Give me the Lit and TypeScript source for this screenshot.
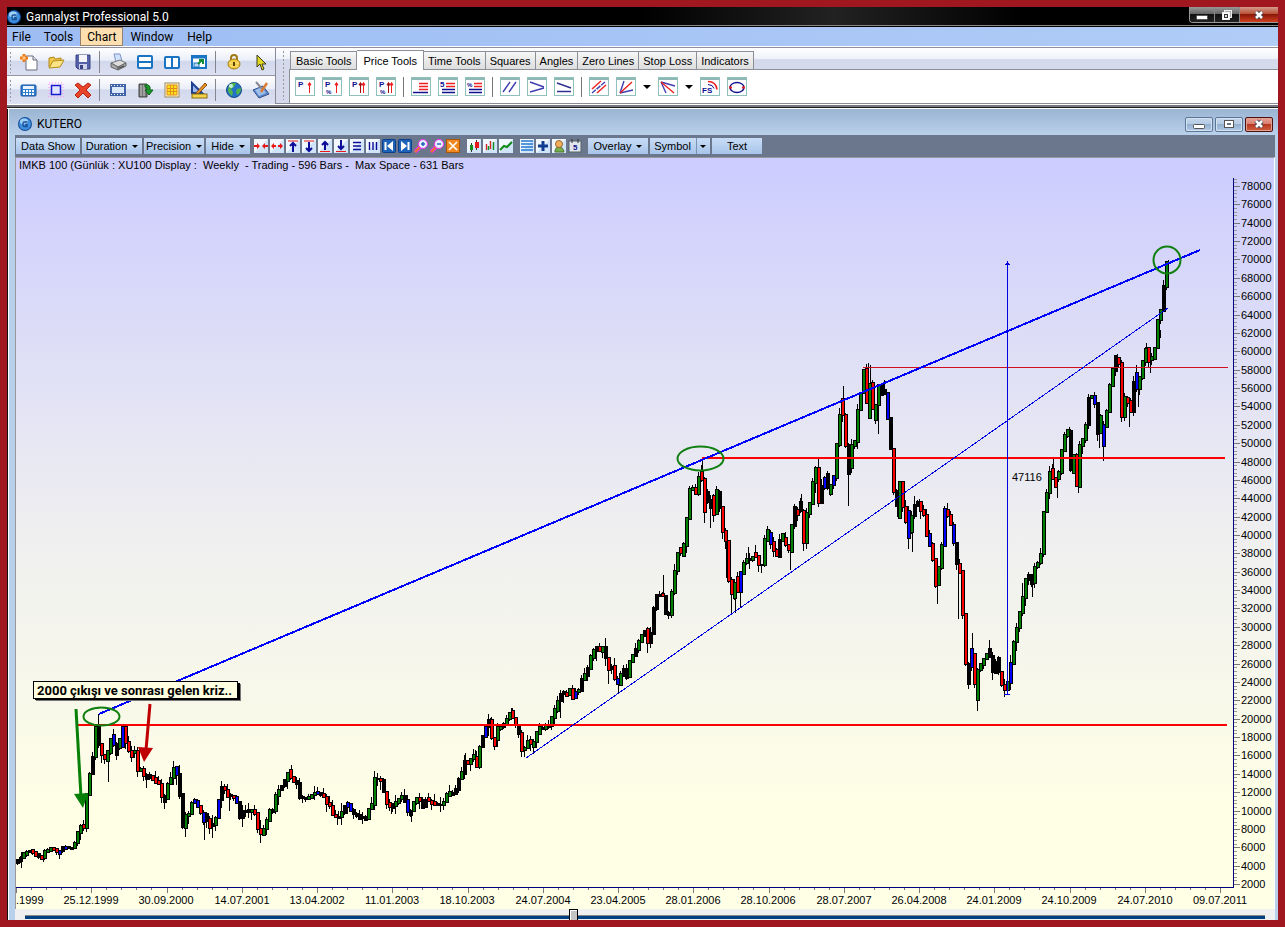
import { LitElement, html, svg, css } from "lit";
import { customElement } from "lit/decorators.js";

const icon = (body: unknown, w = 18, h = 18) =>
  html`<svg class="ico" width=${w} height=${h} viewBox="0 0 ${w} ${h}" aria-hidden="true">${body}</svg>`;

const orb = svg`<circle cx="7" cy="7" r="7" fill="#124a9c"/><circle cx="7" cy="7" r="6" fill="#3f8fdc"/><ellipse cx="6" cy="4.500" rx="4" ry="3" fill="#9fd0f6"/><path d="M9.500 5H6.500Q5 5 5 6.500V8.500Q5 9.500 6.500 9.500H9V7.500H7" fill="none" stroke="#174f96" stroke-width="1.400"/>`;

/* Standard toolbar pictures, drawn on an 18 x 18 grid */
const std: Record<string, unknown> = {
  New: svg`<path d="M6 3h7l4 4v10H6z" fill="#fff" stroke="#6b6b7c"/><path d="M13 3v4h4" fill="#dfe4f2" stroke="#6b6b7c"/><path d="M4 1v8M0 5h8" stroke="#f07a14" stroke-width="3"/><path d="M4 3v4M2 5h4" stroke="#ffd9a0"/>`,
  Open: svg`<path d="M2 14V5l5-1 1 2 6-1v3" fill="#f0c84c" stroke="#b48a18"/><path d="M2 15l4-7 11-1-4 7z" fill="#fbe486" stroke="#b48a18"/>`,
  Save: svg`<path d="M2 2h14v14H4l-2-2z" fill="#5561a8" stroke="#3a4484"/><rect x="5" y="2" width="8" height="7" fill="#f4f6fb"/><rect x="5" y="11" width="8" height="5" fill="#cfd4ea"/><rect x="6" y="12" width="3" height="4" fill="#3a4484"/>`,
  Print: svg`<path d="M5 1l6-0 2 7-6 1z" fill="#cfe2ff" stroke="#7f93c4"/><path d="M2 10l9-3 6 3-8 4z" fill="#dcdcdc" stroke="#777"/><path d="M2 10v4l7 3v-3zM9 14v3l8-4v-3z" fill="#a9a9a9" stroke="#666"/><path d="M10 15l5-2" stroke="#333"/>`,
  "Tile Horizontally": svg`<rect x="2" y="3" width="14" height="12" rx="1" fill="#fff" stroke="#1a74c4" stroke-width="2"/><path d="M2 9h14" stroke="#1a74c4" stroke-width="2"/>`,
  "Tile Vertically": svg`<rect x="2" y="4" width="14" height="11" rx="1" fill="#fff" stroke="#1a74c4" stroke-width="2"/><path d="M9 3v11" stroke="#1a74c4" stroke-width="2"/>`,
  Maximize: svg`<rect x="2" y="3" width="14" height="12" fill="#fff" stroke="#1a74c4" stroke-width="2"/><path d="M2 4h14" stroke="#1a74c4" stroke-width="3"/><rect x="4" y="10" width="5" height="4" fill="#bcd8f2" stroke="#1a74c4"/><path d="M8 11l4-4M9 7h4v4" fill="none" stroke="#138a36" stroke-width="2"/>`,
  Lock: svg`<path d="M6 8V5q0-3 3-3t3 3v3" fill="none" stroke="#a07a14" stroke-width="2"/><ellipse cx="9" cy="11" rx="6" ry="5" fill="#f4cb3c" stroke="#a07a14"/><path d="M4 10h10M5 13h8" stroke="#fbe58c"/><path d="M9 9v4" stroke="#5b420a" stroke-width="2"/>`,
  Select: svg`<path d="M5 2v12l3-3 2 6 2-1-2-5h4z" fill="#e0d820" stroke="#3a3a20"/>`,
  Calculator: svg`<rect x="1" y="4" width="15" height="11" rx="1" fill="#2f7fd0" stroke="#1b57a6"/><rect x="3" y="5" width="11" height="3" fill="#e8f3ff"/><path d="M3 10h11M3 13h11" stroke="#fff" stroke-width="2" stroke-dasharray="2 1"/>`,
  Region: svg`<rect x="2" y="2" width="14" height="14" fill="none" stroke="#ff8cff" stroke-dasharray="1 2"/><rect x="4.500" y="4.500" width="9" height="9" fill="#dfe4ff" stroke="#1a1ad0" stroke-width="1.500"/>`,
  Delete: svg`<path d="M1 4l3-2 5 4 5-4 3 2-5 5 5 5-3 3-5-5-5 5-3-3 5-5z" fill="#e8452a" stroke="#b52410"/>`,
  Film: svg`<rect x="1" y="3" width="16" height="12" fill="#3f62a8"/><rect x="3" y="6" width="12" height="6" fill="#dbe8fa"/><path d="M2 4.500h15M2 13.500h15" stroke="#fff" stroke-dasharray="1 2"/>`,
  Export: svg`<path d="M3 3h8v13H3z" fill="#777" stroke="#444"/><path d="M5 4v11M8 4v11" stroke="#ccc"/><path d="M9 4q6-1 5 5h3l-4 5-4-5h2q1-3-2-3z" fill="#1d9a2c" stroke="#0c6418"/>`,
  Grid: svg`<rect x="2" y="2" width="14" height="14" fill="#fff6c8" stroke="#9a8a60"/><path d="M4 4h10v10H4zM7.500 4v10M10.500 4v10M4 7.500h10M4 10.500h10" fill="#ffe21c" stroke="#e08a18"/>`,
  Draw: svg`<path d="M2 2v10h10z" fill="#9bb8e8" stroke="#1d3f92" stroke-width="2"/><path d="M6 12l9-10 2 2-9 9z" fill="#e7962c" stroke="#8a4b10"/><rect x="2" y="13" width="15" height="4" fill="#f3d34a" stroke="#8a6b10"/>`,
  Web: svg`<circle cx="9" cy="9" r="7.500" fill="#2472c8" stroke="#164a86"/><path d="M4 4q4-3 7-2l-2 4-3 2 2 3-1 4q-4-3-4-6zM12 8l4-1q0 5-4 7l-1-3z" fill="#4fb54a"/><circle cx="6" cy="5" r="2" fill="#c8f0d8"/>`,
  Notes: svg`<path d="M1 9l10-4 6 8-10 4z" fill="#5b86cc" stroke="#34508c"/><path d="M3 9l7-3 4 6-7 3z" fill="#9dbdea"/><path d="M4 1l7 8" stroke="#8a8a94" stroke-width="2"/><path d="M15 2L9 11" stroke="#d87c38" stroke-width="2.500"/>`,
};

/* Price tools: content of a 20 x 19 framed tile */
const pp = svg`<text class="pix" x="3" y="10">P</text>`;
const pct = svg`<text class="pix t" x="4" y="17">%</text>`;
const up = (x: number, c: string) => svg`<path d="M${x} 16V6M${x - 1.5} 8L${x} 5.500l1.500 2.500z" fill=${c} stroke=${c}/>`;
const dk = "#101090", rd = "#f02020";
const price: Record<string, unknown> = {
  "Price": svg`${pp}${up(14.5, rd)}`,
  "Price Percent": svg`${pp}${pct}${up(14.5, rd)}`,
  "Price Range": svg`${pp}${up(11.5, "#a01010")}${up(14.5, rd)}`,
  "Price Range Percent": svg`${pp}${pct}${up(12.5, "#a01010")}${up(15.5, rd)}`,
  "Levels": svg`<path d="M8 6.500h9M8 9.500h9M8 12.500h9" stroke=${rd} stroke-width="1.500"/><path d="M2 15.500h15" stroke=${dk} stroke-width="1.500"/>`,
  "Levels Five": svg`<text class="pix" x="2" y="10">5</text><path d="M8 6.500h9M8 9.500h9" stroke=${rd} stroke-width="1.500"/><path d="M4 12.500h13M4 15.500h13" stroke=${dk} stroke-width="1.500"/>`,
  "Levels Percent": svg`<text class="pix t" x="2" y="10">%</text><path d="M9 6.500h8M9 9.500h8" stroke=${rd} stroke-width="1.500"/><path d="M4 12.500h13M4 15.500h13" stroke=${dk} stroke-width="1.500"/>`,
  "Parallel": svg`<path d="M3 15L10 5M9 15L16 5" stroke="#4040b0" stroke-width="1.400"/>`,
  "Wedge": svg`<path d="M3 5l14 5M3 15l14-4" stroke="#4040b0" stroke-width="1.400"/>`,
  "Triangle": svg`<path d="M3 6l14 5M3 14.500h14" stroke="#303090" stroke-width="1.400"/>`,
  "Channels": svg`<path d="M3 12L12 4M8 16l9-8" stroke=${rd} stroke-width="1.400"/><path d="M3 16L16 5" stroke="#4040b0" stroke-width="1.400" stroke-dasharray="5 1"/>`,
  "Fan Up": svg`<path d="M4 16L8 4M4 16l13-3" stroke="#4040b0" stroke-width="1.400"/><path d="M4 16L16 5" stroke=${rd} stroke-width="1.400"/>`,
  "Fan Down": svg`<path d="M3 5l14 4M3 5l5 11" stroke="#4040b0" stroke-width="1.400"/><path d="M3 5l13 11" stroke=${rd} stroke-width="1.400"/>`,
  "Arc": svg`<text class="pix" x="2" y="16">FS</text><path d="M8 4.500q8 0 9 8" fill="none" stroke=${rd} stroke-width="1.600"/><path d="M8 7.500q5 0 6 4" fill="none" stroke=${dk}/>`,
  "Ellipse": svg`<ellipse cx="10" cy="10.500" rx="7" ry="5" fill="none" stroke=${dk} stroke-width="1.400"/><path d="M2 10.500h3M15 10.500h3" stroke=${rd} stroke-width="2"/>`,
};

/* Chart toolbar: content of a 14 x 14 tile */
const face = svg`<rect width="14" height="14" fill="#f0f7fe"/><path d="M14 0v14H0z" fill="#cfe4f8"/>`;
const nb = "#0c0c98";
const mini: [string, unknown][] = [
  ["Compress", svg`${face}<path d="M0 7h4M14 7h-4" stroke="#e81818" stroke-width="2"/><path d="M3 4l3 3-3 3zM11 4L8 7l3 3z" fill="#e81818"/>`],
  ["Expand", svg`${face}<path d="M3 7h3M8 7h3" stroke="#e81818" stroke-width="2"/><path d="M4 4L1 7l3 3zM10 4l3 3-3 3z" fill="#e81818"/>`],
  ["Top Up", svg`${face}<path d="M2 2h10" stroke="#e81818"/><path d="M7 13V4M4 7l3-3 3 3" fill="none" stroke=${nb} stroke-width="2"/>`],
  ["Top Down", svg`${face}<path d="M2 2h10" stroke="#e81818"/><path d="M7 3v9M4 9l3 3 3-3" fill="none" stroke=${nb} stroke-width="2"/>`],
  ["Bottom Up", svg`${face}<path d="M2 12.500h10" stroke="#e81818"/><path d="M7 11V3M4 6l3-3 3 3" fill="none" stroke=${nb} stroke-width="2"/>`],
  ["Bottom Down", svg`${face}<path d="M2 12.500h10" stroke="#e81818"/><path d="M7 1v9M4 7l3 3 3-3" fill="none" stroke=${nb} stroke-width="2"/>`],
  ["Rows", svg`${face}<path d="M3 3.500h8M3 7h8M3 10.500h8" stroke=${nb} stroke-width="1.400"/>`],
  ["Columns", svg`${face}<path d="M3.500 3v8M7 3v8M10.500 3v8" stroke=${nb} stroke-width="1.400"/>`],
  ["First", svg`<rect x=".5" y=".5" width="13" height="13" rx="1" fill="#1c62b8" stroke="#0c3f88"/><path d="M3.500 3v8" stroke="#fff" stroke-width="2"/><path d="M11 2v10L5 7z" fill="#fff"/>`],
  ["Last", svg`<rect x=".5" y=".5" width="13" height="13" rx="1" fill="#1c62b8" stroke="#0c3f88"/><path d="M10.500 3v8" stroke="#fff" stroke-width="2"/><path d="M3 2v10l6-5z" fill="#fff"/>`],
  ["Zoom In", svg`<path d="M1 13l5-5" stroke="#f030f0" stroke-width="4"/><path d="M1 13l5-5" stroke="#e07828" stroke-width="2"/><circle cx="9" cy="5" r="4.500" fill="#e4f2ff" stroke="#f030f0"/><path d="M7 5h4M9 3v4" stroke="#2858b8" stroke-width="1.400"/>`],
  ["Zoom Out", svg`<path d="M1 13l5-5" stroke="#f030f0" stroke-width="4"/><path d="M1 13l5-5" stroke="#e07828" stroke-width="2"/><circle cx="9" cy="5" r="4.500" fill="#e4f2ff" stroke="#f030f0"/><path d="M7 5h4" stroke="#2858b8" stroke-width="1.400"/>`],
  ["Reset", svg`<rect x=".5" y=".5" width="13" height="13" fill="#f08a20" stroke="#a85608"/><path d="M3 3l8 8M11 3l-8 8" stroke="#fff" stroke-width="1.600"/>`],
];
const mini2: [string, unknown][] = [
  ["Candles", svg`${face}<path d="M4.500 4v9M9.500 1v10" stroke="#333"/><rect x="3" y="6" width="3" height="5" fill="#109020"/><rect x="8" y="3" width="4" height="6" fill="#e81818"/>`],
  ["Bars", svg`${face}<path d="M3.500 5v6M7.500 2v8" stroke="#d02828" stroke-width="1.400"/><path d="M5.500 11V7M10.500 3v8" stroke="#109020" stroke-width="1.400"/>`],
  ["Line", svg`${face}<path d="M1 11l4-4 3 1 5-5" fill="none" stroke="#108a18" stroke-width="2"/>`],
];
const mini3: [string, unknown][] = [
  ["List", svg`${face}<path d="M1 2h12M1 5h12M1 8h12M1 11h12" stroke="#2478d0" stroke-width="1.600"/>`],
  ["Add", svg`${face}<path d="M2 7h10M7 2v10" stroke="#103c90" stroke-width="3"/>`],
  ["User", svg`${face}<path d="M3 13q0-5 4-5t5 5z" fill="#78b050" stroke="#487028"/><circle cx="7" cy="5" r="3.500" fill="#f0b060" stroke="#a06828"/>`],
  ["Calendar", svg`<rect x="1" y="2" width="12" height="11" fill="#dfe5ea" stroke="#59636e"/><path d="M4 0v4M10 0v4" stroke="#333"/><text class="pix" x="5" y="11">5</text>`],
];

/* Closing values of the weekly series, as points of the drawing */
const closes: number[] = [
  17,862, 21,860, 23,855, 27,852, 31,851, 35,854, 39,855, 43,858, 46,852, 50,849, 56,850, 60,854, 62,848, 66,847,
  72,849, 75,846, 78,838, 80,827, 83,826, 85,828, 86,815, 88,795, 90,780, 92,767, 94,757, 96,742, 97,727, 99,740,
  102,752, 104,758, 107,760, 110,748, 113,735, 115,745, 117,755, 119,740, 121,747, 123,730, 124,727, 126,740,
  129,745, 131,757, 134,751, 136,752, 138,770, 142,769, 144,775, 147,779, 150,775, 153,778, 157,782, 160,784,
  163,797, 165,801, 167,796, 169,784, 172,778, 175,768, 177,770, 180,785, 182,804, 184,827, 187,816, 190,814,
  192,805, 195,800, 199,806, 202,813, 205,821, 207,815, 210,827, 214,824, 217,818, 219,810, 221,790, 223,787,
  226,790, 228,796, 231,795, 235,797, 239,803, 241,817, 244,811, 248,812, 254,810, 257,814, 259,829, 262,834,
  265,829, 268,820, 271,811, 275,809, 277,796, 281,788, 285,784, 288,774, 290,771, 292,777, 295,782, 298,783,
  300,798, 304,798, 309,798, 312,795, 318,793, 324,794, 327,803, 331,806, 334,815, 338,817, 342,816, 344,807,
  349,804, 352,811, 357,816, 362,818, 367,819, 370,809, 373,804, 375,779, 380,779, 384,783, 386,800, 391,807,
  397,803, 402,796, 406,801, 409,812, 411,815, 413,807, 417,799, 420,799, 424,807, 428,799, 433,803, 440,805,
  444,804, 449,793, 455,794, 458,786, 461,776, 464,771, 466,761, 469,764, 474,755, 476,758, 478,767, 480,750,
  484,737, 487,727, 490,720, 493,738, 495,746, 497,734, 499,728, 503,727, 506,722, 509,717, 512,711, 515,722,
  519,727, 521,738, 523,750, 526,748, 530,740, 534,746, 537,734, 541,728, 546,728, 551,725, 554,714, 558,705,
  560,697, 563,692, 567,695, 571,689, 574,698, 578,690, 581,691, 583,680, 588,672, 591,659, 595,650, 598,647,
  602,652, 604,648, 607,658, 609,669, 613,667, 617,683, 620,685, 623,670, 626,670, 628,677, 630,664, 634,656,
  638,647, 641,640, 645,632, 648,629, 649,643, 652,633, 654,615, 657,597, 660,595, 664,596, 667,614, 670,615,
  672,598, 675,580, 677,562, 680,548, 683,556, 686,540, 688,518, 691,490, 694,488, 697,494, 699,480, 701,473,
  703,479, 705,511, 707,492, 711,507, 713,496, 715,514, 717,490, 720,497, 722,517, 725,538, 728,542, 730,580,
  732,590, 734,598, 737,577, 739,592, 741,577, 744,565, 747,560, 752,560, 756,553, 759,565, 763,565, 765,545,
  768,530, 771,540, 775,550, 778,556, 781,540, 783,535, 787,545, 791,552, 793,525, 795,507, 798,515, 801,503,
  803,518, 805,543, 807,517, 809,510, 812,500, 814,482, 817,468, 819,470, 820,503, 823,487, 827,475, 830,494,
  833,480, 836,475, 838,445, 840,423, 843,400, 845,430, 847,445, 849,473, 851,460, 853,445, 857,440, 859,410,
  861,403, 863,382, 865,370, 867,385, 869,418, 871,384, 873,396, 875,419, 877,405, 880,385, 883,394, 885,390,
  887,395, 889,419, 891,427, 893,470, 895,492, 897,494, 899,518, 901,482, 903,492, 905,522, 907,512, 909,538,
  912,520, 915,508, 918,503, 920,502, 922,510, 925,515, 928,535, 931,545, 934,560, 937,585, 939,578, 941,557,
  943,545, 945,510, 948,514, 951,520, 954,535, 957,560, 959,568, 961,572, 963,590, 965,637, 967,664, 969,684,
  971,649, 973,655, 975,668, 977,700, 979,670, 982,664, 984,660, 988,655, 990,650, 993,668, 995,673, 998,658,
  1000,672, 1003,685, 1006,690, 1009,682, 1011,670, 1013,655, 1016,635, 1020,620, 1022,605, 1024,598, 1027,580,
  1030,575, 1033,583, 1035,568, 1038,564, 1041,562, 1043,545, 1045,512, 1047,495, 1049,490, 1051,472, 1053,470,
  1055,487, 1058,475, 1061,470, 1064,440, 1067,432, 1069,431, 1071,467, 1073,472, 1075,455, 1077,486, 1079,485,
  1081,445, 1083,443, 1086,432, 1088,418, 1090,398, 1093,396, 1096,403, 1097,428, 1099,433, 1101,416, 1103,445,
  1105,426, 1107,414, 1109,410, 1111,385, 1114,370, 1116,356, 1119,362, 1121,363, 1123,417, 1126,398, 1129,402,
  1132,411, 1134,390, 1136,374, 1138,389, 1141,378, 1143,370, 1145,354, 1147,349, 1149,362, 1151,358, 1154,359,
  1157,342, 1159,320, 1161,312, 1163,307, 1165,286, 1168,262,
];

/* Single long shadows: x, top, bottom */
const shadows: number[] = [
  21,852,868, 43,854,862, 59,850,859, 98,714,742, 108,758,782, 146,776,788, 164,799,809, 185,812,837, 204,820,840,
  212,815,838, 229,793,811, 242,805,827, 260,820,839, 291,765,778, 317,787,795, 337,814,825, 341,814,825, 374,771,790,
  377,773,785, 380,777,790, 391,806,814, 411,810,822, 465,753,765, 475,750,757, 490,718,730, 511,708,716, 524,748,757,
  560,690,718, 608,662,684, 618,680,693, 663,575,596, 702,460,478, 704,505,523, 710,500,528, 731,577,615, 735,590,613,
  740,580,607, 726,542,578, 748,547,560, 790,545,570, 801,494,505, 818,458,470, 843,386,405, 848,470,506, 868,363,380,
  870,365,384, 866,364,374, 878,408,434, 897,493,517, 908,535,549, 912,532,552, 919,499,508, 937,580,604, 947,503,515,
  958,566,619, 972,633,648, 977,700,711, 989,640,654, 1007,685,695, 1022,583,608, 1032,583,597, 1053,459,472, 1057,485,498,
  1069,427,433, 1078,486,493, 1099,433,448, 1103,440,461, 1117,354,364, 1129,402,427, 1138,389,407, 1146,343,353,
  1150,360,373, 1160,330,338, 1168,260,282,
];

const closeAt = (x: number) => {
  let i = 0;
  while (i < closes.length - 4 && closes[i + 2] < x) i += 2;
  const [x0, y0, x1, y1] = closes.slice(i, i + 4);
  return y0 + ((y1 - y0) * (x - x0)) / (x1 - x0);
};

const candles = () => {
  const out: unknown[] = [];
  let seed = 7;
  const rnd = () => (seed = (seed * 16807) % 2147483647) / 2147483647;
  for (let x = 17; x <= 1166; x += 3) {
    const open = Math.round(closeAt(x - 1));
    const close = Math.round(closeAt(x + 2));
    const range = [open, close, Math.round(closeAt(x)), Math.round(closeAt(x + 1))];
    const top = Math.min(...range) - (rnd() < 0.4 ? 2 : 1);
    const bottom = Math.max(...range) + (rnd() < 0.4 ? 2 : 1);
    const reach = x < 80 ? 3 : 10;
    const hi = top - Math.floor(rnd() * rnd() * reach);
    const lo = bottom + Math.floor(rnd() * rnd() * reach);
    const r = rnd();
    const colour = r < 0.08 ? "#0000ff" : r < 0.34 ? "#000" : close < open ? "#008000" : "#ff0000";
    out.push(svg`<path d="M${x} ${hi}h1V${lo}h-1z"/><path d="M${x - 1} ${top}h4V${bottom}h-4z"/>`);
    if (bottom - top > 3) out.push(svg`<path d="M${x} ${top + 1}h2V${bottom - 1}h-2z" fill=${colour}/>`);
  }
  for (let i = 0; i < shadows.length; i += 3)
    out.unshift(svg`<path d="M${shadows[i]} ${shadows[i + 1]}h1V${shadows[i + 2]}h-1z"/>`);
  return out;
};

const dates = ["25.12.1999", "30.09.2000", "14.07.2001", "13.04.2002", "11.01.2003", "18.10.2003", "24.07.2004",
  "23.04.2005", "28.01.2006", "28.10.2006", "28.07.2007", "26.04.2008", "24.01.2009", "24.10.2009", "24.07.2010", "09.07.2011"];

@customElement("price-chart")
class PriceChart extends LitElement {
  static styles = css`
    :host { display: block; min-height: 0; background: linear-gradient(#ccccff 0%, #e0e0f6 28%, #efeff0 50%, #f8f8ea 72%, #ffffe6 86%); }
    svg { display: block; width: 100%; height: 100%; }
    text { font: 11px "Liberation Sans", Arial, sans-serif; fill: #000; white-space: pre; }
    .date { text-anchor: middle; }
    .note { font: bold 13px Roboto, "Noto Sans", sans-serif; }
  `;

  render() {
    const yAxis: unknown[] = [];
    for (let i = 0; i <= 38; i++) {
      const y = 884 - (i * 698) / 38;
      yAxis.push(svg`<path d="M1234 ${Math.round(y)}h6v1h-6z" fill="#777"/><text x="1241" y=${Math.round(y) + 4}>${2000 + i * 2000}</text>`);
      for (let k = 1; k < 5; k++) if (i < 38 || k < 3) yAxis.push(svg`<path d="M1234 ${Math.round(y - (k * 698) / 190)}h3v1h-3z" fill="#999"/>`);
    }
    const xAxis: unknown[] = [];
    for (let i = 0; i <= 80; i++) {
      const x = 16 + Math.round(i * 15.05);
      xAxis.push(svg`<path d=${`M${x} 888h1v${i % 5 ? 2 : 5}h-1z`} fill="#777"/>`);
    }
    return html`<svg viewBox="16 158 1258 751" preserveAspectRatio="xMinYMin" role="img" aria-label="XU100 weekly candles">
      <text x="19" y="169">IMKB 100 (Günlük : XU100 Display :  Weekly  - Trading - 596 Bars -  Max Space - 631 Bars</text>
      <g shape-rendering="crispEdges">${candles()}
        <path d="M863 367h365v1H863z" fill="#d01020"/>
        <path d="M1233 178h1v710h-1zM16 887h1217v1H16z" fill="#000080"/>
        ${yAxis}${xAxis}
        <path d="M77 724h1150v2H77zM702 457h523v2H702z" fill="#ff0000"/>
        <path d="M99 714L1200 250" stroke="#0000ff" stroke-width="2"/>
        <path d="M526 758L1168 308M1007.500 262v432M1004 694.500h6" stroke="#0000e0" fill="none"/>
        <path d="M1007 261h1v2h1v1h1v1h-5v-1h1v-1h1z" fill="#0000e0"/>
      </g>
      <g fill="none" stroke="#108010" stroke-width="2">
        <ellipse cx="101.500" cy="716.500" rx="18" ry="9"/>
        <ellipse cx="700.500" cy="458.500" rx="23" ry="12"/>
        <circle cx="1167" cy="260" r="13.500"/>
      </g>
      <path d="M76 709l5 88" stroke="#088008" stroke-width="3"/><path d="M74 794l14-1-5 15z" fill="#088008"/>
      <path d="M150 704l-4 46" stroke="#c00000" stroke-width="3"/><path d="M138 747l15 1-9 14z" fill="#c00000"/>
      <text x="1012" y="481">47116</text>
      <rect x="36" y="684" width="205" height="17" fill="#777"/><rect x="35" y="683" width="205" height="17"/>
      <rect x="33.500" y="681.500" width="204" height="17" fill="#ffffe1" stroke="#000"/>
      <text class="note" x="37" y="695">2000 çıkışı ve sonrası gelen kriz..</text>
      <text x="16" y="904">.1999</text>
      ${dates.map((d, i) => svg`<text class="date" x=${91 + Math.round(i * 75.25)} y="904">${d}</text>`)}
    </svg>`;
  }
}

const button = (name: string, cls: string, body: unknown) =>
  html`<button class=${cls} aria-label=${name}>${body}</button>`;
const tile = (name: string) => button(name, "tile", icon(price[name], 20, 19));
const stdBtn = (name: string) => button(name, "std", icon(std[name]));
const miniSet = (list: [string, unknown][]) =>
  html`<div class="minis">${list.map(([n, b]) => button(n, "mini", icon(b, 14, 14)))}</div>`;
const arrow = html`<span class="arrow"></span>`;

@customElement("app-root")
class AppRoot extends LitElement {
  static styles = css`
    :host { display: flex; flex-direction: column; box-sizing: border-box; height: 100vh; padding: 7px; background: #a1171f; overflow: hidden;
      font: 11px "Liberation Sans", Arial, sans-serif; color: #000; }
    * { box-sizing: border-box; }
    button { border: 0; padding: 0; margin: 0; background: none; font: inherit; color: inherit; }
    .ico { display: block; }
    .pix { font: bold 8px "Liberation Sans", sans-serif; fill: #101090; }
    .pix.t { font-size: 6px; }
    .title { display: flex; align-items: center; height: 20px; flex: none; background: linear-gradient(90deg, #000 50%, #222 65%, #000 80%); color: #fff;
      border-bottom: 1px solid #000; box-shadow: inset 0 -1px #888; font: 12px Roboto, "Noto Sans", sans-serif; gap: 5px; }
    .title h1 { flex: 1; margin: 0; font: inherit; white-space: nowrap; }
    .caps { display: flex; align-self: flex-start; height: 16px; border: 1px solid #999; border-top: 0; border-right: 0; border-radius: 0 0 0 4px; overflow: hidden; }
    .caps button { display: grid; place-items: center; width: 25px; background: linear-gradient(#999 0, #666 45%, #111 50%, #222); border-right: 1px solid #888; }
    .caps .x { width: 38px; background: linear-gradient(#d49a8c 0, #b85238 45%, #8c1808 50%, #d04020); border: 0; }
    .menu { display: flex; align-items: stretch; height: 21px; flex: none; background: linear-gradient(90deg, #9dbdf3, #b0ccf7); border-bottom: 1px solid #8e8e9e;
      box-shadow: inset 0 -1px #fff; padding-bottom: 1px; font: 12px Roboto, "Noto Sans", sans-serif; }
    .menu button { padding: 0 6px; border: 1px solid transparent; height: 19px; }
    .menu button:first-child { padding: 0 5px 0 4px; }
    .menu .on { background: #fee0b0; border-color: #94806c; }
    .bars { display: flex; flex: none; height: 56px; border-bottom: 1px solid #8a8a96; background: #fff; }
    .left { width: 269px; border-right: 1px solid #8a8a96; flex: none; }
    .row { display: flex; align-items: center; height: 28px; padding-left: 8px; border-bottom: 1px solid #94949e; background: linear-gradient(#fff, #eaeef8 45%, #d3d9ec 50%, #dbe1f2); }
    .row + .row { border-bottom: 0; }
    .grip { flex: none; width: 3px; height: 22px; margin-left: -6px; margin-right: 3px; background: radial-gradient(circle, #999 1px, transparent 1px) 0 0 / 3px 4px; }
    .std { width: 27px; flex: none; display: grid; place-items: center; }
    .sep { width: 1px; height: 22px; flex: none; background: #85858f; margin: 0 4px 0 3px; }
    .right { flex: 1; min-width: 0; display: flex; background: linear-gradient(#fff, #eef2fa 20%, #d5d9ec 21%); padding-left: 12px; }
    .right .grip { height: 50px; margin: 2px 4px 0 -6px; }
    .tabbox { flex: 1; min-width: 0; }
    .tabs { display: flex; align-items: flex-end; height: 22px; padding-left: 1px; border-bottom: 1px solid #8a8f98; }
    .tabs button { height: 18px; padding: 0 4px; border: 1px solid #8a8f98; border-left-width: 0; border-bottom: 0; background: linear-gradient(#f6f6f6, #dedede); white-space: nowrap; }
    .tabs button:first-child { border-left-width: 1px; padding: 0 5px; }
    .tabs .on { height: 20px; padding: 0 6px; background: #fff; margin-bottom: -1px; }
    .tools { display: flex; align-items: center; height: 33px; background: #fff; border-left: 1px solid #8a8f98; padding-left: 5px; gap: 7px; }
    .tile { width: 20px; height: 19px; background: #fff; box-shadow: inset 0 0 0 1px #8fc0bc, inset 0 3px #8fb8b4; flex: none; }
    .vsep { width: 1px; height: 20px; background: #777; }
    .arrow { display: inline-block; border: 3px solid transparent; border-top: 3px solid #000; border-bottom: 0; }
    .tools .arrow { border-width: 4px 4px 0; }
    .child { flex: 1; min-height: 0; display: flex; flex-direction: column; margin-top: 5px; background: #b9d0ea; border-left: 1px solid #111; padding: 0 3px 0 7px;
      box-shadow: 0 -1px #fff, 0 -2px #222, 0 -4px #77777f, 0 -5px #fff, inset 1px 0 #fff; }
    .ctitle { display: flex; align-items: center; height: 26px; flex: none; background: linear-gradient(#9ab4d2, #b9d0ea); padding: 4px 5px 0 9px; margin: 0 -3px 0 -6px; gap: 5px; font: 12px Roboto, "Noto Sans", sans-serif; }
    .ctitle h2 { flex: 1; margin: 0; font: inherit; }
    .ctitle button { width: 28px; height: 15px; border: 1px solid #5c7698; border-radius: 2px; background: linear-gradient(#c4d6ea, #b4cae4 45%, #94b0d0 50%, #b0cae6); display: grid; place-items: center; box-shadow: inset 0 0 0 1px #d4e2f0; }
    .cgroup { display: flex; gap: 2px; }
    .ctitle .x { border-color: #501010; background: linear-gradient(#e8a498, #d88070 45%, #b83820 50%, #d06040); box-shadow: inset 0 0 0 1px #e0a090; }
    .ctools { display: flex; align-items: center; height: 22px; flex: none; background: #6b778d; padding-left: 1px; gap: 2px; }
    .tb { height: 16px; padding: 0 5px; background: linear-gradient(#c8dcf6, #a8c4ea); white-space: nowrap; display: flex; align-items: center; justify-content: center; gap: 5px; }
    .minis { display: flex; gap: 2px; margin-left: 2px; }
    .minis + .minis { margin-left: 5px; }
    .mini { width: 14px; height: 14px; }
    .w64 { width: 64px; } .w60 { width: 60px; } .w44 { width: 44px; } .w50 { width: 50px; }
    .split { border-left: 1px solid #7c92b4; align-self: stretch; display: flex; align-items: center; padding-left: 3px; }
    .gap { width: 2px; }
    price-chart { flex: 1; border-top: 1px solid #98989c; border-left: 1px solid #98989c; border-right: 1px solid #fff; }
    .slide { height: 11px; flex: none; background: #f0f0f0; overflow: hidden; padding: 0 10px; }
    input { appearance: none; -webkit-appearance: none; display: block; width: 100%; height: 16px; margin: 0; background: linear-gradient(#888 0 1px, #003f80 1px 4px) 0 6px / 100% 4px no-repeat; }
    input::-webkit-slider-thumb { appearance: none; -webkit-appearance: none; width: 9px; height: 16px; background: #c4c4c4; border: 1px solid #000; box-shadow: inset 1px 1px #fff; }
  `;

  render() {
    const min = icon(svg`<rect x="2.500" y="6.500" width="11" height="4" rx="1" fill="#fff" stroke="#555"/>`, 16, 12);
    const close = icon(svg`<path d="M5 3l6 6M11 3L5 9" stroke="#445" stroke-width="4.500"/><path d="M5 3l6 6M11 3L5 9" stroke="#fff" stroke-width="2.500"/>`, 16, 12);
    return html`
      <header class="title">
        ${icon(orb, 14, 14)}
        <h1>Gannalyst Professional 5.0</h1>
        <div class="caps">
          ${button("Minimize", "", min)}
          ${button("Restore", "", icon(svg`<rect x="5.500" y="1.500" width="7" height="7" fill="#aaa" stroke="#eee"/><rect x="3.500" y="3.500" width="7" height="7" fill="#fff" stroke="#eee"/><rect x="5.500" y="5.500" width="3" height="3" fill="#ddd" stroke="#333"/>`, 16, 12))}
          ${button("Close", "x", close)}
        </div>
      </header>
      <nav class="menu">
        <button>File</button><button>Tools</button><button class="on">Chart</button><button>Window</button><button>Help</button>
      </nav>
      <div class="bars">
        <div class="left">
          <div class="row"><span class="grip"></span>${["New", "Open", "Save"].map(stdBtn)}<span class="sep"></span>
            ${["Print", "Tile Horizontally", "Tile Vertically", "Maximize"].map(stdBtn)}<span class="sep"></span>${["Lock", "Select"].map(stdBtn)}</div>
          <div class="row"><span class="grip"></span>${["Calculator", "Region", "Delete"].map(stdBtn)}<span class="sep"></span>
            ${["Film", "Export", "Grid", "Draw"].map(stdBtn)}<span class="sep"></span>${["Web", "Notes"].map(stdBtn)}</div>
        </div>
        <div class="right">
          <span class="grip"></span>
          <div class="tabbox">
            <div class="tabs" role="tablist">
              ${["Basic Tools", "Price Tools", "Time Tools", "Squares", "Angles", "Zero Lines", "Stop Loss", "Indicators"].map(
                (t) => html`<button role="tab" class=${t === "Price Tools" ? "on" : ""}>${t}</button>`)}
            </div>
            <div class="tools">
              ${["Price", "Price Percent", "Price Range", "Price Range Percent"].map(tile)}<span class="vsep"></span>
              ${["Levels", "Levels Five", "Levels Percent"].map(tile)}<span class="vsep"></span>
              ${["Parallel", "Wedge", "Triangle"].map(tile)}<span class="vsep"></span>
              ${tile("Channels")}${tile("Fan Up")}${arrow}${tile("Fan Down")}${arrow}${tile("Arc")}${tile("Ellipse")}
            </div>
          </div>
        </div>
      </div>
      <main class="child">
        <div class="ctitle">
          ${icon(orb, 14, 14)}
          <h2>KUTERO</h2>
          <div class="cgroup">
            ${button("Minimize chart", "", min)}
            ${button("Maximize chart", "", icon(svg`<rect x="3.500" y="2.500" width="9" height="7" fill="#fff" stroke="#555"/><rect x="6" y="5" width="4" height="2" fill="#678"/>`, 16, 12))}
            ${button("Close chart", "x", close)}
          </div>
        </div>
        <div class="ctools">
          <button class="tb w64">Data Show</button>
          <button class="tb w60">Duration ${arrow}</button>
          <button class="tb w60">Precision ${arrow}</button>
          <button class="tb w44">Hide ${arrow}</button>
          ${miniSet(mini)}${miniSet(mini2)}${miniSet(mini3)}
          <span class="gap"></span>
          <button class="tb w60">Overlay ${arrow}</button>
          <button class="tb w60">Symbol <span class="split">${arrow}</span></button>
          <button class="tb w50">Text</button>
        </div>
        <price-chart></price-chart>
        <div class="slide"><input type="range" aria-label="Scroll bars" min="0" max="631" value="279"></div>
      </main>`;
  }
}
